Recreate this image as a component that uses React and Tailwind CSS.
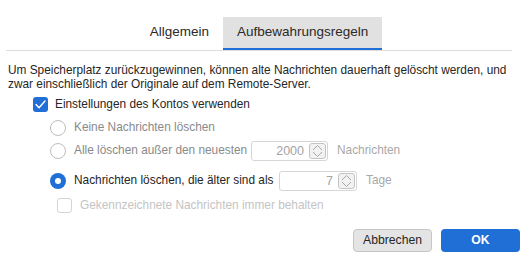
import React from "react";

const font = { fontFamily: "'Liberation Sans', Arial, sans-serif" };

function Stepper() {
  return (
    <div className="w-[17px] h-[16px] border border-[#c4c4c4] rounded-[3px] bg-[#f2f2f2] flex items-center justify-center shrink-0">
      <svg width="13" height="14" viewBox="0 0 13 14" fill="none" stroke="#a9a9a9" strokeWidth="1">
        <path d="M2 6 L6.5 1.5 L11 6" />
        <path d="M2 8 L6.5 12.5 L11 8" />
      </svg>
    </div>
  );
}

function NumberField({ value, width }) {
  return (
    <div className={`h-[20px] ${width} shrink-0 border border-[#d6d6d6] rounded-[3px] bg-white flex items-center justify-end pr-[1px] gap-[5px]`}>
      <span className="text-[12.5px] text-[#a3a3a3]">{value}</span>
      <Stepper />
    </div>
  );
}

function Radio({ checked }) {
  if (checked) {
    return (
      <div className="w-[16px] h-[16px] shrink-0 rounded-full bg-[#1f6fd6] flex items-center justify-center">
        <div className="w-[6px] h-[6px] rounded-full bg-white" />
      </div>
    );
  }
  return <div className="w-[16px] h-[16px] shrink-0 rounded-full border border-[#bdbdbd] bg-white" />;
}

export default function App() {
  return (
    <div className="w-[530px] h-[266px] bg-white text-[#262626] relative whitespace-nowrap" style={font}>
      <div className="pt-[17px] flex justify-center pr-[12px]">
        <div className="h-[31px] px-[14px] flex items-center text-[13.5px] text-[#2a2a2a]">Allgemein</div>
        <div className="h-[33px] px-[14px] flex items-center text-[13.5px] text-[#2a2a2a] bg-[#e1e1e1] border-b-2 border-[#1f6fd6]">Aufbewahrungsregeln</div>
      </div>
      <div className="ml-[6px] w-[506px] h-px bg-[#dcdcdc]" />
      <div className="mt-[12px] ml-[8px] text-[11.85px] leading-[14px] text-[#262626]">
        <div>Um Speicherplatz zurückzugewinnen, können alte Nachrichten dauerhaft gelöscht werden, und</div>
        <div>zwar einschließlich der Originale auf dem Remote-Server.</div>
      </div>
      <div className="mt-[6px] ml-[33px] flex items-center gap-[7px] h-[15px]">
        <div className="w-[15px] h-[15px] rounded-[3px] bg-[#1f6fd6] flex items-center justify-center">
          <svg width="11" height="9" viewBox="0 0 11 9" fill="none" stroke="white" strokeWidth="1.4" strokeLinecap="round" strokeLinejoin="round">
            <path d="M1 4.5 L4 7.8 L10 1" />
          </svg>
        </div>
        <span className="text-[11.85px]">Einstellungen des Kontos verwenden</span>
      </div>
      <div className="ml-[50px] mt-[8px] flex flex-col">
        <div className="flex items-center h-[16px]">
          <Radio />
          <span className="ml-[8px] text-[11.85px] text-[#8a8a8a]">Keine Nachrichten löschen</span>
        </div>
        <div className="flex items-center h-[20px] mt-[5px]">
          <Radio />
          <span className="ml-[8px] w-[177px] text-[11.85px] text-[#8a8a8a]">Alle löschen außer den neuesten</span>
          <NumberField value="2000" width="w-[77px]" />
          <span className="ml-[9px] text-[11.85px] text-[#a8a8a8]">Nachrichten</span>
        </div>
        <div className="flex items-center h-[20px] mt-[10px]">
          <Radio checked />
          <span className="ml-[8px] w-[205px] text-[11.85px] text-[#262626]">Nachrichten löschen, die älter sind als</span>
          <NumberField value="7" width="w-[78px]" />
          <span className="ml-[9px] text-[11.85px] text-[#a8a8a8]">Tage</span>
        </div>
        <div className="flex items-center h-[15px] mt-[7px] ml-[7px]">
          <div className="w-[15px] h-[15px] rounded-[3px] border border-[#d4d4d4] bg-white" />
          <span className="ml-[8px] text-[11.85px] text-[#c4c4c4]">Gekennzeichnete Nachrichten immer behalten</span>
        </div>
      </div>
      <div className="mt-[16px] flex justify-end gap-[9px] pr-[10px]">
        <button className="w-[79px] h-[23px] rounded-[4px] border border-[#c6c6c6] bg-[#e4e4e4] text-[12.2px] text-[#262626]">Abbrechen</button>
        <button className="w-[79px] h-[23px] rounded-[4px] bg-[#1f6fd6] text-[12.2px] text-white font-bold">OK</button>
      </div>
    </div>
  );
}
